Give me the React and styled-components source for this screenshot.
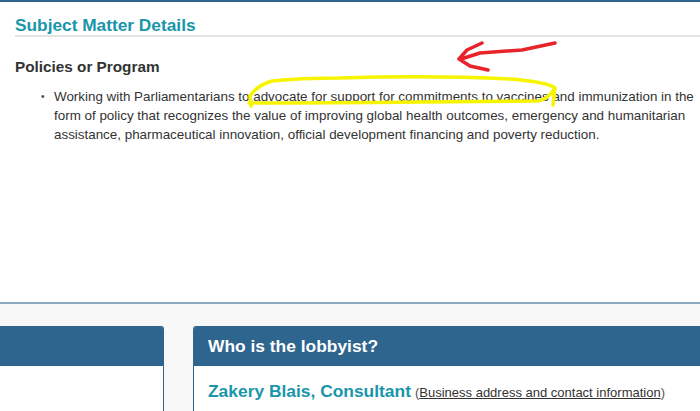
import React from 'react'
import styled, { createGlobalStyle } from 'styled-components'

const GlobalStyle = createGlobalStyle`
	html, body {
		margin: 0;
		padding: 0;
		background: #fff;
		font-family: "Liberation Sans", Arial, sans-serif;
		color: #333;
		overflow: hidden;
	}
`

const Page = styled.div`
	position: relative;
	width: 700px;
	height: 411px;
	border-top: 2px solid #2e658e;
	box-sizing: border-box;
	overflow: hidden;
`

const Details = styled.section`
	padding: 0 0 0 15px;
	height: 300px;
`

const SectionTitle = styled.h2`
	margin: 0;
	padding: 14px 0 1px;
	font-size: 17.3px;
	font-weight: bold;
	color: #1996aa;
	border-bottom: 2px solid #e3e3e3;
	line-height: 18px;
`

const SubTitle = styled.h3`
	margin: 21px 0 11px;
	font-size: 15.3px;
	font-weight: bold;
	color: #333;
	line-height: 18px;
`

const List = styled.ul`
	margin: 0;
	padding: 0 4px 0 39px;
	list-style: none;
`

const Item = styled.li`
	position: relative;
	font-size: 13.4px;
	line-height: 19px;
	color: #333;

	&::before {
		content: '•';
		position: absolute;
		left: -13px;
		top: 0;
		font-size: 10px;
		color: #444;
	}
`

const Lower = styled.div`
	background: #f8f8f8;
	border-top: 2px solid #8ea8c0;
	height: 109px;
	padding-top: 22px;
	box-sizing: border-box;
	display: flex;
	gap: 29px;
	margin-left: -42px;
`

const Panel = styled.div`
	flex: 0 0 ${p => p.width}px;
	background: #fff;
	border: 1px solid #2e658e;
	border-bottom: none;
	border-radius: 3px 3px 0 0;
	overflow: hidden;
`

const PanelHeader = styled.div`
	background: #2e658e;
	color: #fff;
	height: 39px;
	padding: 0 14px;
	display: flex;
	align-items: center;
	font-size: 17.4px;
	font-weight: bold;
`

const PanelBody = styled.div`
	padding: 15px 14px 0;
`

const Rule = styled.div`
	margin-top: 30px;
	border-top: 2px solid #e6e6e6;
`

const Name = styled.span`
	font-size: 17.4px;
	font-weight: bold;
	color: #1996aa;
`

const Contact = styled.span`
	font-size: 13px;
	color: #555;
	margin-left: 4px;

	a {
		color: #333;
		text-decoration: underline;
	}
`

const Scribble = styled.svg`
	position: absolute;
	left: 0;
	top: -2px;
	pointer-events: none;
`

const App = () => (
	<>
		<GlobalStyle />
		<Page>
			<Details>
				<SectionTitle>Subject Matter Details</SectionTitle>
				<SubTitle>Policies or Program</SubTitle>
				<List>
					<Item>
						Working with Parliamentarians to advocate for support for commitments to vaccines and immunization in the
						form of policy that recognizes the value of improving global health outcomes, emergency and humanitarian
						assistance, pharmaceutical innovation, official development financing and poverty reduction.
					</Item>
				</List>
			</Details>
			<Lower>
				<Panel width={204}>
					<PanelHeader>&nbsp;</PanelHeader>
					<PanelBody>
						<Rule />
					</PanelBody>
				</Panel>
				<Panel width={560}>
					<PanelHeader>Who is the lobbyist?</PanelHeader>
					<PanelBody>
						<Name>Zakery Blais, Consultant</Name>
						<Contact>
							(<a href="#">Business address and contact information</a>)
						</Contact>
					</PanelBody>
				</Panel>
			</Lower>
			<Scribble width="700" height="411" viewBox="0 0 700 411">
				<path
					d="M251 106 L250 96 Q256 86 272 81 Q300 78 340 78 Q430 75 510 79 Q548 82 555 88 L553 105 M249 103 Q320 103 420 102 L538 101 Q550 98 554 89"
					fill="none"
					stroke="#f7f400"
					strokeWidth="3.5"
					strokeLinecap="round"
					strokeLinejoin="round"
				/>
				<path
					d="M555 43 L522 50 L480 53 L461 59 M482 43 L467 50 L459 59 L470 66 L488 70"
					fill="none"
					stroke="#e8242a"
					strokeWidth="3.5"
					strokeLinecap="round"
					strokeLinejoin="round"
				/>
			</Scribble>
		</Page>
	</>
)

export default App
